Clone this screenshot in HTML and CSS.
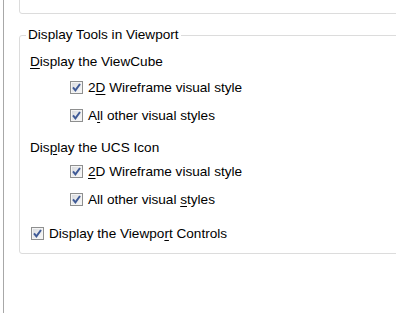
FILE: index.html
```html
<!DOCTYPE html>
<html lang="en">
  <head>
    <meta charset="UTF-8" />
    <title>Display Tools in Viewport</title>
    <link rel="stylesheet" href="styles.css">
  </head>
  <body>
    <div class="pane">
      <!-- group above, cut off by the top edge -->
      <div class="group group-prev"></div>

      <div class="group">
        <span class="legend">Display Tools in Viewport</span>

        <div class="label first"><span><u>D</u>isplay the ViewCube</span></div>
        <label class="check sub">
          <span class="box"><svg width="9" height="9" viewBox="0 0 9 9"><path d="M1 4.4 L3.4 7.3 L8 1" /></svg></span>
          <span>2<u>D</u> Wireframe visual style</span>
        </label>
        <label class="check sub">
          <span class="box"><svg width="9" height="9" viewBox="0 0 9 9"><path d="M1 4.4 L3.4 7.3 L8 1" /></svg></span>
          <span>A<u>l</u>l other visual styles</span>
        </label>

        <div class="label second"><span>Dis<u>p</u>lay the UCS Icon</span></div>
        <label class="check sub">
          <span class="box"><svg width="9" height="9" viewBox="0 0 9 9"><path d="M1 4.4 L3.4 7.3 L8 1" /></svg></span>
          <span><u>2</u>D Wireframe visual style</span>
        </label>
        <label class="check sub">
          <span class="box"><svg width="9" height="9" viewBox="0 0 9 9"><path d="M1 4.4 L3.4 7.3 L8 1" /></svg></span>
          <span>All other visual <u>s</u>tyles</span>
        </label>

        <label class="check last">
          <span class="box"><svg width="9" height="9" viewBox="0 0 9 9"><path d="M1 4.4 L3.4 7.3 L8 1" /></svg></span>
          <span>Display the Viewpo<u>r</u>t Controls</span>
        </label>
      </div>
    </div>
  </body>
</html>
```

FILE: styles.css
```css
/* Page */
body {
  margin: 0;
  background: #fff;
  font-family: "Liberation Sans", Arial, sans-serif;
  font-size: 13.6px;
  color: #000;
  overflow: hidden;
}

.pane {
  height: 313px;
  margin-left: 3px;
  border-left: 1px solid #a8a8a8;
  padding-left: 15px;
  overflow: hidden;
}

/* Group boxes */
.group {
  position: relative;
  margin-right: -20px;
  border: 1px solid #dcdcdc;
  border-radius: 3px;
}

.group-prev {
  height: 22px;
  margin-top: -10px;
}

.group:not(.group-prev) {
  margin-top: 21px;
  height: 217px;
}

.legend {
  position: absolute;
  top: -9px;
  left: 6px;
  padding: 0 2px;
  line-height: 16px;
  background: #fff;
}

/* Rows */
.label,
.check {
  display: flex;
  align-items: center;
  height: 20px;
}

.label {
  padding-left: 10px;
}

.label.first {
  margin-top: 15px;
}

.label.second {
  margin-top: 12px;
}

.check.sub {
  padding-left: 50px;
  margin-top: 8px;
}

.label.first + .check.sub {
  margin-top: 6px;
}

.label.second + .check.sub {
  margin-top: 4px;
}

.check.last {
  padding-left: 11px;
  margin-top: 14px;
}

/* Checkbox */
.box {
  width: 11px;
  height: 11px;
  margin-right: 5px;
  border: 1px solid #8e8f8f;
  background: linear-gradient(135deg, #d6d8dc, #fbfbfb);
  box-shadow: inset 0 0 0 1px #f4f4f4;
  display: flex;
  align-items: center;
  justify-content: center;
}

.box svg path {
  fill: none;
  stroke: #3f5a96;
  stroke-width: 2;
}

u {
  text-underline-offset: 2px;
}
```
